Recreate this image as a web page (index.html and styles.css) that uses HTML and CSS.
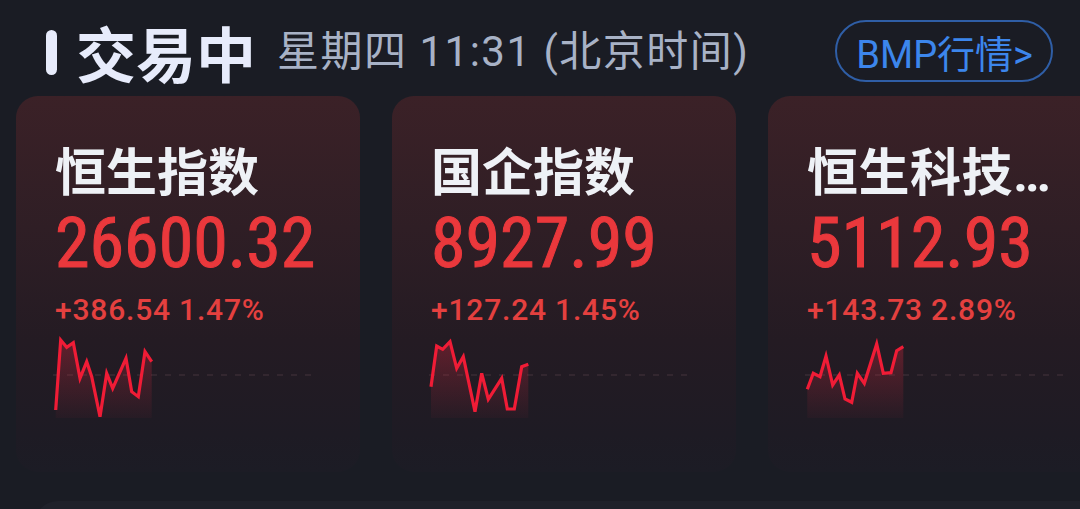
FILE: index.html
```html
<!DOCTYPE html>
<html lang="zh-CN">
<head>
<meta charset="utf-8">
<title>交易中</title>
<link rel="stylesheet" href="styles.css">
</head>
<body>
<div class="page">
  <header class="header">
    <span class="status-bar"></span>
    <h1 class="status">交易中</h1>
    <span class="time">星期四 11:31 (北京时间)</span>
    <a class="bmp-btn">BMP行情&gt;</a>
  </header>

  <div class="cards">
    <section class="card">
      <div class="card-title">恒生指数</div>
      <div class="price">26600.32</div>
      <div class="change">+386.54 1.47%</div>
      <svg class="spark" width="266" height="80" viewBox="0 0 266 80">
        <defs>
          <linearGradient id="g1" x1="0" y1="0" x2="0" y2="1">
            <stop offset="0" stop-color="#d8283e" stop-opacity="0.34"/>
            <stop offset="1" stop-color="#d8283e" stop-opacity="0.04"/>
          </linearGradient>
        </defs>
        <line x1="0" y1="37" x2="266" y2="37" class="base"/>
        <polygon fill="url(#g1)" points="2.7,72 7.7,2 13.7,9.3 20.3,4.7 27,40.3 33.7,23.7 38.7,38.7 47,78.7 53.7,35.3 59.7,50.3 73,20.3 78.7,53.7 85.3,58.7 92,13.7 98.7,23.7 98.7,80 2.7,80"/>
        <polyline class="line" points="2.7,72 7.7,2 13.7,9.3 20.3,4.7 27,40.3 33.7,23.7 38.7,38.7 47,78.7 53.7,35.3 59.7,50.3 73,20.3 78.7,53.7 85.3,58.7 92,13.7 98.7,23.7"/>
      </svg>
    </section>

    <section class="card">
      <div class="card-title">国企指数</div>
      <div class="price">8927.99</div>
      <div class="change">+127.24 1.45%</div>
      <svg class="spark" width="266" height="80" viewBox="0 0 266 80">
        <defs>
          <linearGradient id="g2" x1="0" y1="0" x2="0" y2="1">
            <stop offset="0" stop-color="#d8283e" stop-opacity="0.34"/>
            <stop offset="1" stop-color="#d8283e" stop-opacity="0.04"/>
          </linearGradient>
        </defs>
        <line x1="0" y1="37" x2="266" y2="37" class="base"/>
        <polygon fill="url(#g2)" points="2,48.7 7.7,8 13.7,11.3 21,3.7 27.7,30.3 34.3,18.7 46,73.7 52.7,35.3 59.3,61.3 72.7,40.3 78.3,71 85.3,71 92.7,28.7 99.3,26.3 99.3,80 2,80"/>
        <polyline class="line" points="2,48.7 7.7,8 13.7,11.3 21,3.7 27.7,30.3 34.3,18.7 46,73.7 52.7,35.3 59.3,61.3 72.7,40.3 78.3,71 85.3,71 92.7,28.7 99.3,26.3"/>
      </svg>
    </section>

    <section class="card">
      <div class="card-title truncate">恒生科技指数</div>
      <div class="price">5112.93</div>
      <div class="change">+143.73 2.89%</div>
      <svg class="spark" width="266" height="80" viewBox="0 0 266 80">
        <defs>
          <linearGradient id="g3" x1="0" y1="0" x2="0" y2="1">
            <stop offset="0" stop-color="#d8283e" stop-opacity="0.34"/>
            <stop offset="1" stop-color="#d8283e" stop-opacity="0.04"/>
          </linearGradient>
        </defs>
        <line x1="0" y1="37" x2="266" y2="37" class="base"/>
        <polygon fill="url(#g3)" points="2.3,51.3 8.3,35.3 15,38.7 21,18 27.7,47 34.3,37 40,61 46.7,64.3 52.3,35.3 59.3,45.3 71.7,6 78.3,35.3 86,34.7 91.7,12.7 98.3,8.7 98.3,80 2.3,80"/>
        <polyline class="line" points="2.3,51.3 8.3,35.3 15,38.7 21,18 27.7,47 34.3,37 40,61 46.7,64.3 52.3,35.3 59.3,45.3 71.7,6 78.3,35.3 86,34.7 91.7,12.7 98.3,8.7"/>
      </svg>
    </section>
  </div>

  <div class="next-row"></div>
</div>
</body>
</html>
```

FILE: styles.css
```css
html, body {
  margin: 0;
  padding: 0;
  background: #1a1c24;
  overflow: hidden;
}

.page {
  width: 1080px;
  height: 509px;
  overflow: hidden;
  font-family: Roboto, "Noto Sans CJK SC", sans-serif;
}

.header {
  display: flex;
  align-items: center;
  height: 96px;
  padding: 8px 27px 0 46px;
  box-sizing: border-box;
}

.status-bar {
  width: 11px;
  height: 45px;
  border-radius: 6px;
  background: #e7ebfb;
  flex: none;
}

.status {
  margin: 0 0 0 19px;
  font-family: "Noto Sans CJK SC", sans-serif;
  font-weight: 700;
  font-size: 60px;
  line-height: 66px;
  color: #e7ebfb;
}

.time {
  margin-left: 21px;
  font-family: Roboto, "Noto Sans CJK SC", sans-serif;
  font-size: 42px;
  line-height: 50px;
  letter-spacing: 1.5px;
  color: #a8b2c6;
  white-space: nowrap;
}

.bmp-btn {
  margin-left: auto;
  margin-top: -2px;
  height: 62px;
  box-sizing: border-box;
  display: flex;
  align-items: center;
  padding: 0 18px 0 19px;
  border: 2px solid #2f5ea6;
  border-radius: 31px;
  font-family: Roboto, "Noto Sans CJK SC", sans-serif;
  font-size: 38px;
  color: #3c86ec;
  white-space: nowrap;
}

.cards {
  display: flex;
  gap: 32px;
  padding-left: 16px;
}

.card {
  flex: none;
  width: 344px;
  height: 376px;
  box-sizing: border-box;
  padding: 48px 39px 0 39px;
  border-radius: 22px;
  background: linear-gradient(180deg, #3b2127 0%, #2f1e25 35%, #241b23 65%, #1e1b24 90%, #1c1c25 100%);
}

.card-title {
  font-family: Roboto, "Noto Sans CJK SC", sans-serif;
  font-weight: 700;
  font-size: 51px;
  line-height: 60px;
  color: #eef1f6;
  white-space: nowrap;
}

.card-title.truncate {
  overflow: hidden;
  text-overflow: ellipsis;
  letter-spacing: 0.5px;
}

.price {
  margin-top: 1px;
  font-family: "Liberation Sans Narrow", "Roboto Condensed", Roboto, sans-serif;
  font-size: 70px;
  line-height: 76px;
  color: #ea383c;
  -webkit-text-stroke: 1px #ea383c;
  white-space: nowrap;
}

.change {
  margin-top: 12px;
  font-family: Roboto, sans-serif;
  font-weight: 500;
  font-size: 30px;
  line-height: 34px;
  letter-spacing: 0.8px;
  color: #e4403f;
  white-space: nowrap;
}

.spark {
  display: block;
  margin-top: 11px;
  margin-left: -2px;
  overflow: visible;
}

.spark .base {
  stroke: #3a2c34;
  stroke-width: 1.5;
  stroke-dasharray: 6 8;
}

.spark .line {
  fill: none;
  stroke: #f01c36;
  stroke-width: 3.2;
  stroke-linejoin: miter;
  stroke-linecap: butt;
}

.next-row {
  margin: 29px 0 0 34px;
  height: 60px;
  border-radius: 24px 0 0 0;
  background: #1f212a;
}
```
